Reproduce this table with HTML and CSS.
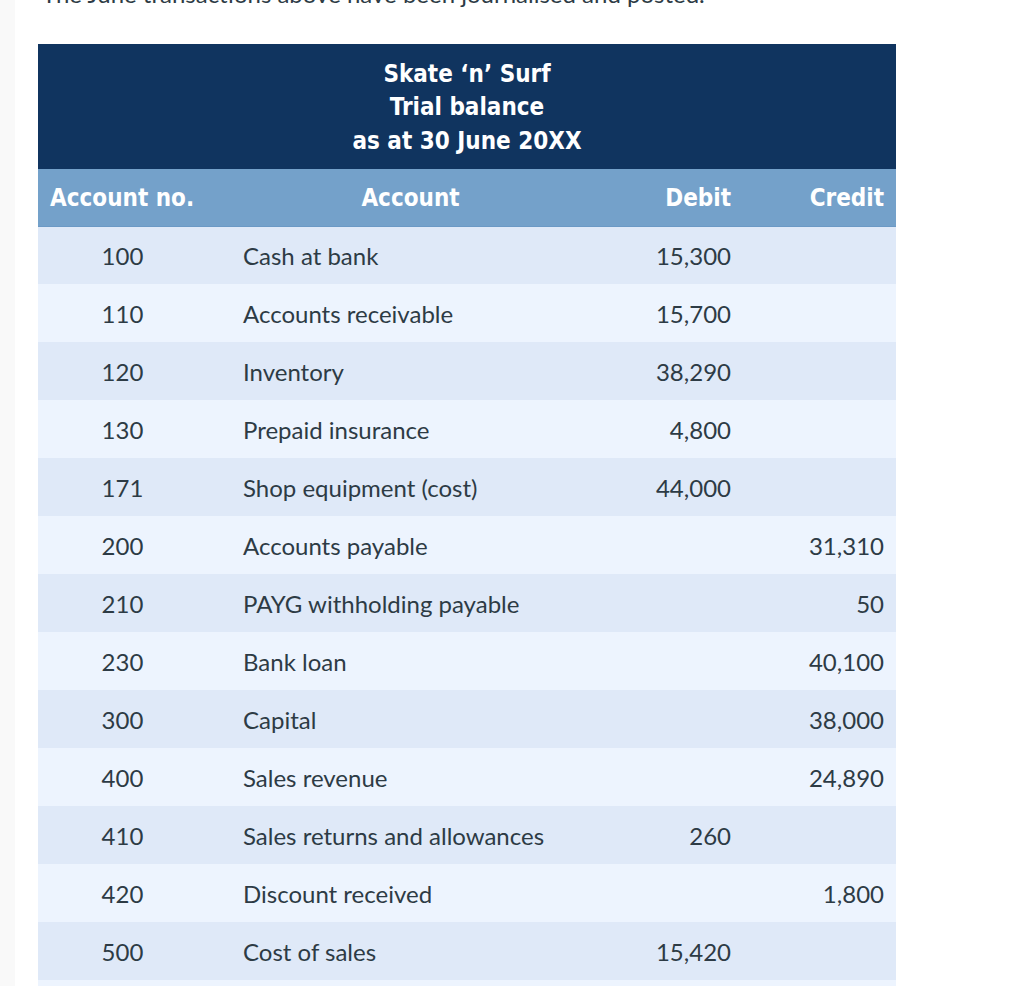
FILE: index.html
```html
<!DOCTYPE html>
<html lang="en">
<head>
<meta charset="utf-8">
<title>Skate 'n' Surf Trial balance</title>
<link rel="stylesheet" href="styles.css">
</head>
<body>
<div class="layout">
  <aside class="rail"></aside>
  <main class="content">
    <p class="intro">The June transactions above have been journalised and posted.</p>
    <table class="tb">
      <colgroup>
        <col class="c-no">
        <col class="c-acc">
        <col class="c-dr">
        <col class="c-cr">
      </colgroup>
      <thead>
        <tr class="title-row">
          <th colspan="4">Skate ‘n’ Surf<br>Trial balance<br>as at 30 June 20XX</th>
        </tr>
        <tr class="head-row">
          <th class="no-h">Account no.</th>
          <th class="acc-h">Account</th>
          <th class="num">Debit</th>
          <th class="num">Credit</th>
        </tr>
      </thead>
      <tbody>
        <tr><td class="no">100</td><td class="acc">Cash at bank</td><td class="num">15,300</td><td class="num"></td></tr>
        <tr><td class="no">110</td><td class="acc">Accounts receivable</td><td class="num">15,700</td><td class="num"></td></tr>
        <tr><td class="no">120</td><td class="acc">Inventory</td><td class="num">38,290</td><td class="num"></td></tr>
        <tr><td class="no">130</td><td class="acc">Prepaid insurance</td><td class="num">4,800</td><td class="num"></td></tr>
        <tr><td class="no">171</td><td class="acc">Shop equipment (cost)</td><td class="num">44,000</td><td class="num"></td></tr>
        <tr><td class="no">200</td><td class="acc">Accounts payable</td><td class="num"></td><td class="num">31,310</td></tr>
        <tr><td class="no">210</td><td class="acc">PAYG withholding payable</td><td class="num"></td><td class="num">50</td></tr>
        <tr><td class="no">230</td><td class="acc">Bank loan</td><td class="num"></td><td class="num">40,100</td></tr>
        <tr><td class="no">300</td><td class="acc">Capital</td><td class="num"></td><td class="num">38,000</td></tr>
        <tr><td class="no">400</td><td class="acc">Sales revenue</td><td class="num"></td><td class="num">24,890</td></tr>
        <tr><td class="no">410</td><td class="acc">Sales returns and allowances</td><td class="num">260</td><td class="num"></td></tr>
        <tr><td class="no">420</td><td class="acc">Discount received</td><td class="num"></td><td class="num">1,800</td></tr>
        <tr><td class="no">500</td><td class="acc">Cost of sales</td><td class="num">15,420</td><td class="num"></td></tr>
        <tr><td class="no">&nbsp;</td><td class="acc"></td><td class="num"></td><td class="num"></td></tr>
      </tbody>
    </table>
  </main>
</div>
</body>
</html>
```

FILE: styles.css
```css
html, body {
  margin: 0;
  padding: 0;
  background: #ffffff;
  overflow: hidden;
}

body {
  font-family: Lato, "Noto Sans", "Liberation Sans", sans-serif;
  color: #2d3b45;
}

.layout {
  display: flex;
  min-height: 986px;
}

.rail {
  width: 15px;
  flex: 0 0 15px;
  background: #f9f9f9;
}

.content {
  flex: 1;
  padding-left: 23px;
}

.intro {
  margin: -24px 0 32px 4px;
  font-size: 24px;
  line-height: 36px;
  white-space: nowrap;
}

.tb {
  border-collapse: collapse;
  table-layout: fixed;
  width: 858px;
}

.c-no { width: 169px; }
.c-acc { width: 383px; }
.c-dr { width: 153px; }
.c-cr { width: 153px; }

.tb th {
  font-family: "DejaVu Sans Condensed", "DejaVu Sans", Verdana, sans-serif;
  font-weight: bold;
  color: #ffffff;
  font-size: 24px;
}

.title-row th {
  background: #10345f;
  height: 125px;
  padding: 3px 0 0;
  text-align: center;
  line-height: 33.5px;
  box-sizing: border-box;
}

.head-row th {
  background: #74a1ca;
  height: 57px;
  padding: 2px 12px 0;
  border-bottom: 1px solid #6b99c5;
  box-sizing: border-box;
}

.head-row .no-h {
  text-align: left;
}

.head-row .acc-h {
  text-align: center;
  padding-left: 36px;
}

.tb td {
  font-size: 24px;
  height: 58px;
  padding: 0 12px;
  box-sizing: border-box;
  vertical-align: middle;
}

.tb tbody tr:nth-child(odd) td {
  background: #dfe9f8;
}

.tb tbody tr:nth-child(even) td {
  background: #edf4fe;
}

.tb td.no {
  text-align: center;
}

.tb td.acc {
  padding-left: 36px;
}

.tb .num {
  text-align: right;
}
```
